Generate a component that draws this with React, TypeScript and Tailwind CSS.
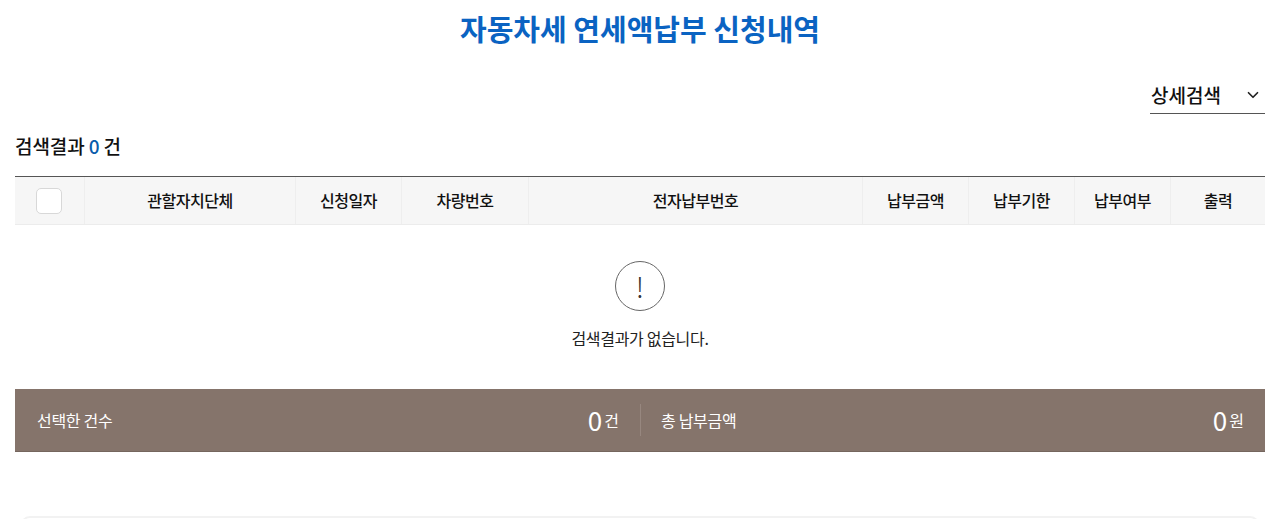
import { ChevronDown } from 'lucide-react';

const columns = [
  { label: '관할자치단체', width: 'w-[211px]' },
  { label: '신청일자', width: 'w-[106px]' },
  { label: '차량번호', width: 'w-[127px]' },
  { label: '전자납부번호', width: 'w-[334px]' },
  { label: '납부금액', width: 'w-[106px]' },
  { label: '납부기한', width: 'w-[106px]' },
  { label: '납부여부', width: 'w-[96px]' },
  { label: '출력', width: 'flex-1' },
];

const fontStack = "font-['Noto_Sans_CJK_KR','Liberation_Sans',sans-serif]";

export default function App() {
  return (
    <div className={`h-[519px] overflow-hidden bg-white px-[15px] text-[#111] ${fontStack}`}>
      <h1 className="pt-[8px] text-center text-[29px] font-bold leading-[40px] text-[#0a63c2]">자동차세 연세액납부 신청내역</h1>

      <div className="mt-[31px] flex justify-end">
        <button className="flex h-[35px] w-[115px] items-center justify-between border-b border-[#555] pb-[2px] pl-px pr-[3px] text-[19px] font-medium leading-[30px]">
          상세검색
          <ChevronDown size={18} strokeWidth={2.25} className="text-[#222]" />
        </button>
      </div>

      <p className="mt-[16px] mb-[14px] text-[19px] font-medium leading-[32px] tracking-[-0.1px]">
        검색결과 <span className="text-[#0b5cab]">0</span> 건
      </p>

      <div className="flex h-[49px] border-t border-b border-[#555] border-b-[#ececec] bg-[#f6f6f6]">
        <div className="flex w-[70px] items-center justify-center border-r border-[#eeeeee]">
          <span className="h-[26px] w-[26px] -translate-x-px rounded-[5px] border border-[#d8d8d8] bg-white" />
        </div>
        {columns.map((col) => (
          <div key={col.label} className={`flex items-center justify-center border-r border-[#eeeeee] pb-px text-[16px] font-medium tracking-[-0.5px] last:border-r-0 ${col.width}`}>
            {col.label}
          </div>
        ))}
      </div>

      <div className="flex h-[164px] flex-col items-center pt-[36px]">
        <div className="flex h-[50px] w-[50px] items-center justify-center rounded-full border border-[#666] text-[28px] font-light leading-none text-[#333]">!</div>
        <p className="mt-[15px] text-[16px] leading-[24px] tracking-[-0.3px] text-[#222]">검색결과가 없습니다.</p>
      </div>

      <div className="flex h-[63px] items-center border-b border-[#75665e] bg-[#85746b] pb-px text-white">
        <div className="flex w-[625px] items-center justify-between pl-[22px] pr-[21px]">
          <span className="text-[16px] tracking-[-0.3px]">선택한 건수</span>
          <span className="flex items-center gap-[2px] text-[16px]"><b className="text-[26px] font-normal leading-[30px]">0</b>건</span>
        </div>
        <div className="h-[32px] w-px bg-[#97877f]" />
        <div className="flex flex-1 items-center justify-between pl-[20px] pr-[21px]">
          <span className="text-[16px] tracking-[-0.3px]">총 납부금액</span>
          <span className="flex items-center gap-[2px] text-[16px]"><b className="text-[26px] font-normal leading-[30px]">0</b>원</span>
        </div>
      </div>

      <div className="mx-[5px] mt-[64px] h-[40px] rounded-[10px] border-2 border-[#f2f2f2]" />
    </div>
  );
}
